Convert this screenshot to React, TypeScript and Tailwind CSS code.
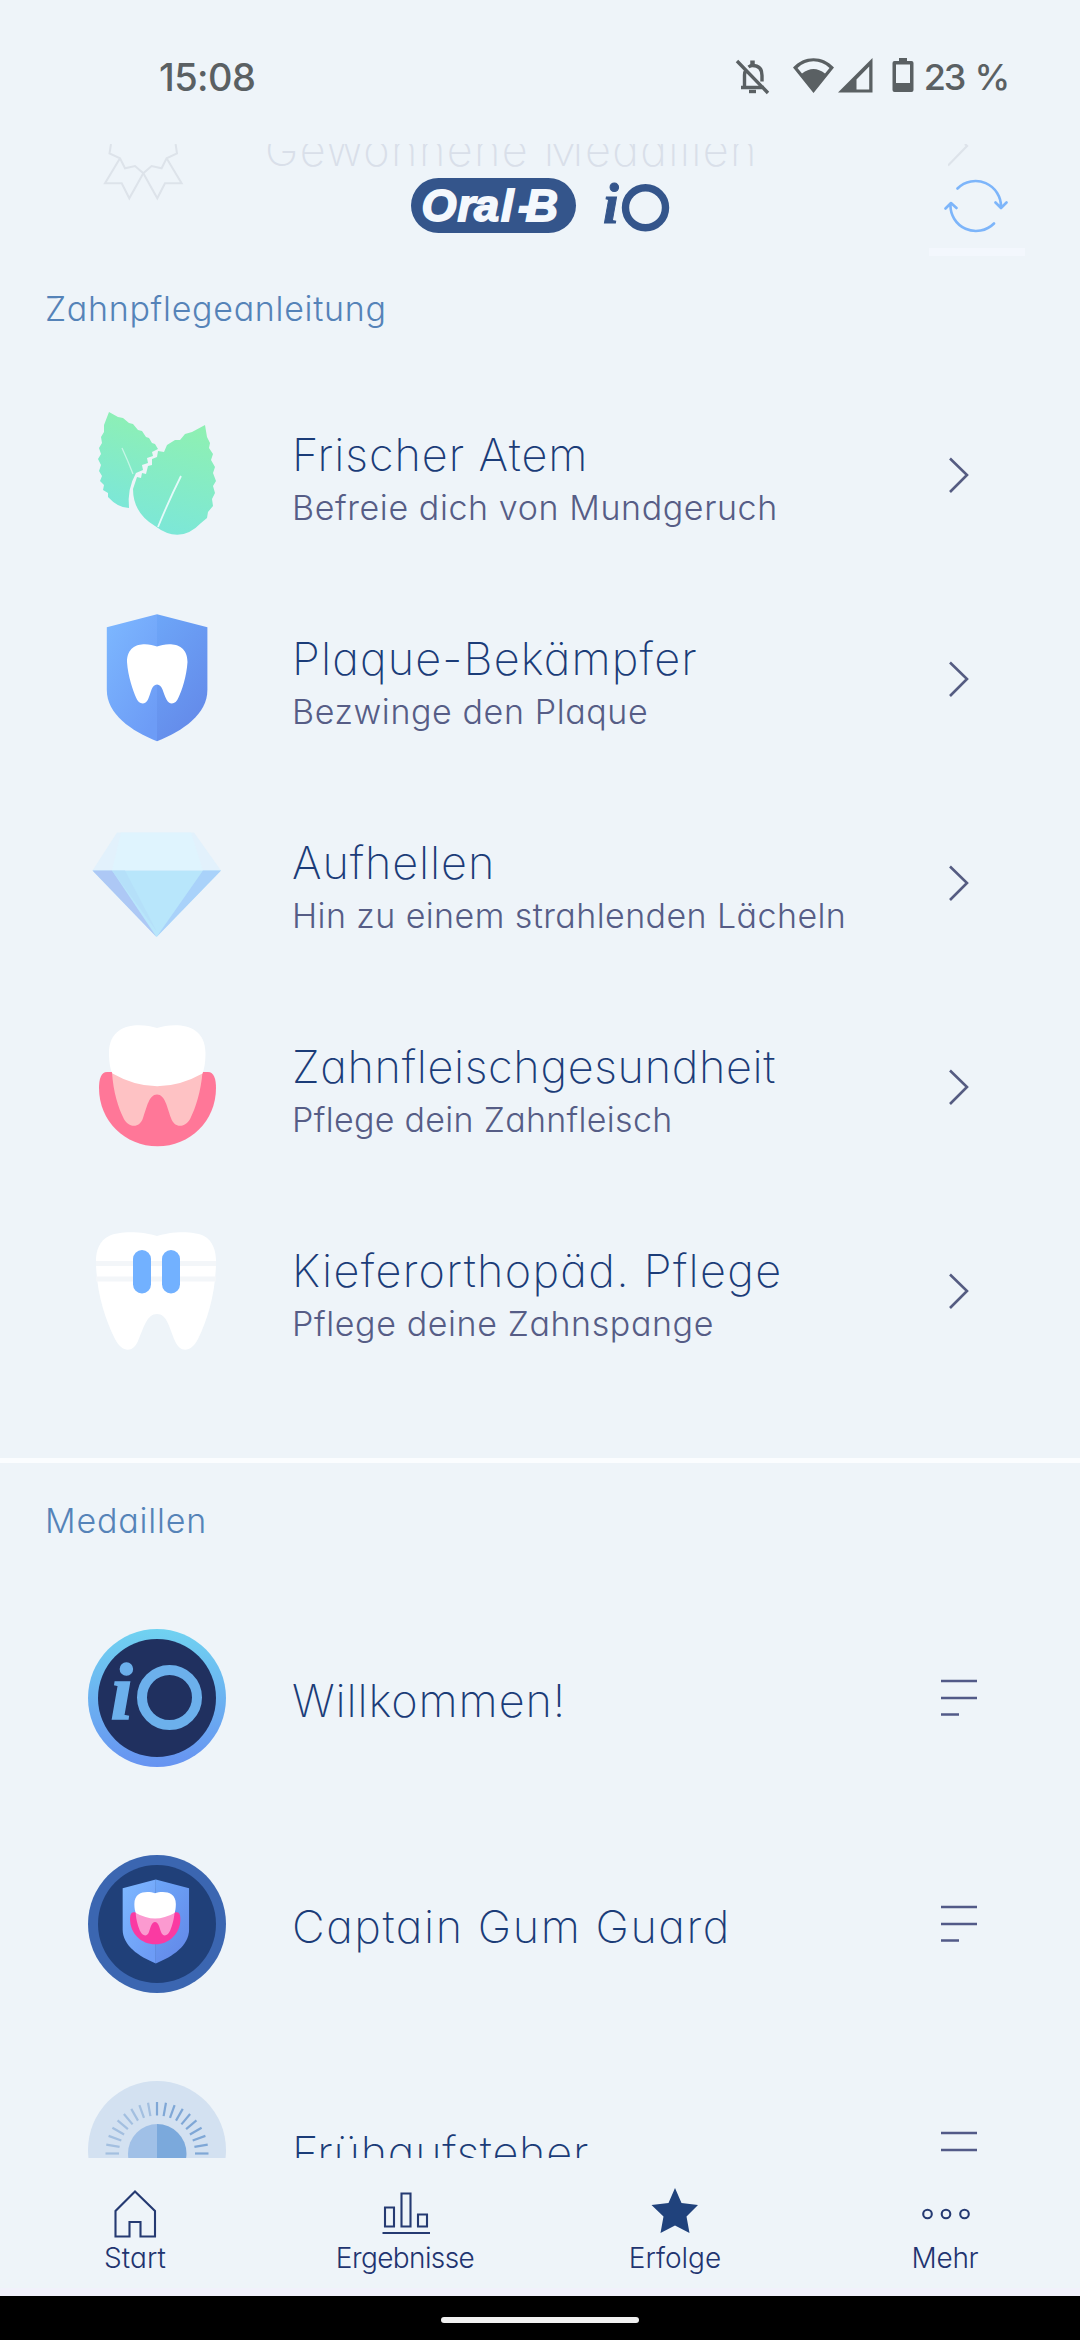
import type { ReactNode } from "react";

type Guide = {
  title: string;
  titleClass: string;
  text: string;
  textClass: string;
  icon: ReactNode;
};

type Medal = {
  title: string;
  titleClass: string;
  icon: ReactNode;
};

const guides: Guide[] = [
  {
    title: "Frischer Atem",
    titleClass: "tracking-[0.95px]",
    text: "Befreie dich von Mundgeruch",
    textClass: "tracking-[0.6px]",
    icon: <LeavesIcon />,
  },
  {
    title: "Plaque-Bekämpfer",
    titleClass: "tracking-[1.15px]",
    text: "Bezwinge den Plaque",
    textClass: "tracking-[0.6px]",
    icon: <ToothShieldIcon />,
  },
  {
    title: "Aufhellen",
    titleClass: "tracking-[0.9px]",
    text: "Hin zu einem strahlenden Lächeln",
    textClass: "tracking-[0.42px]",
    icon: <DiamondIcon />,
  },
  {
    title: "Zahnfleischgesundheit",
    titleClass: "tracking-[0.65px]",
    text: "Pflege dein Zahnfleisch",
    textClass: "tracking-[0.3px]",
    icon: <GumIcon />,
  },
  {
    title: "Kieferorthopäd. Pflege",
    titleClass: "tracking-[1.3px]",
    text: "Pflege deine Zahnspange",
    textClass: "tracking-[0.6px]",
    icon: <BracesIcon />,
  },
];

const medals: Medal[] = [
  { title: "Willkommen!", titleClass: "tracking-[0.9px]", icon: <WelcomeMedal /> },
  { title: "Captain Gum Guard", titleClass: "tracking-[1.55px]", icon: <GumGuardMedal /> },
  { title: "Frühaufsteher", titleClass: "tracking-[0.75px]", icon: <EarlyBirdMedal /> },
];

const rays = Array.from({ length: 19 }, (_, i) => -90 + i * 10);

export default function App() {
  return (
    <div className="flex h-[2340px] w-[1080px] flex-col overflow-hidden bg-[#eef4f9] font-['Inter',sans-serif] [font-feature-settings:'cv11']">
      <StatusBar />

      <main className="relative min-h-0 flex-1 overflow-hidden">
        <PreviousRow />
        <AppHeader />

        <section className="pt-[41px]">
          <SectionTitle className="tracking-[0.7px]">Zahnpflegeanleitung</SectionTitle>
          <ul className="mt-[44px]">
            {guides.map((guide) => (
              <li key={guide.title} className="flex h-[204px] items-center pr-[101px] pl-[87px]">
                {guide.icon}
                <div className="ml-[65px] flex-1 pt-2 whitespace-nowrap">
                  <h3 className={`text-[45px] leading-[52px] font-extralight text-[#1b3c78] ${guide.titleClass}`}>
                    {guide.title}
                  </h3>
                  <p className={`mt-[6px] text-[34px] leading-[42px] font-[340] text-[#565d86] ${guide.textClass}`}>
                    {guide.text}
                  </p>
                </div>
                <svg className="h-[40px] w-[40px]" viewBox="0 0 40 40" fill="none" stroke="#555c82" strokeWidth="2.6">
                  <path d="M11 3.5 28 20 11 37" />
                </svg>
              </li>
            ))}
          </ul>
        </section>

        <div className="mt-[65px] h-[5px] bg-[#fbfdff]" />

        <section className="pt-[38px]">
          <SectionTitle className="tracking-[0.8px]">Medaillen</SectionTitle>
          <ul className="mt-[44px]">
            {medals.map((medal) => (
              <li key={medal.title} className="flex h-[226px] items-center pr-[101px] pl-[87px]">
                {medal.icon}
                <h3
                  className={`ml-[65px] flex-1 pt-[5px] text-[45px] leading-[52px] font-extralight whitespace-nowrap text-[#1b3c78] ${medal.titleClass}`}
                >
                  {medal.title}
                </h3>
                <svg className="h-[40px] w-[40px]" viewBox="0 0 40 40" stroke="#525a88" strokeWidth="2.6">
                  <path d="M2 3h36M2 20h36M2 36.5h18" />
                </svg>
              </li>
            ))}
          </ul>
        </section>
      </main>

      <BottomNav />

      <div className="flex h-[44px] justify-center bg-black pt-[21px]">
        <div className="h-[6px] w-[198px] rounded-full bg-[#f0f0f0]" />
      </div>
    </div>
  );
}

function StatusBar() {
  return (
    <header className="flex h-[144px] items-start justify-between pt-[54px] pr-[72px] pl-[159px] text-[38px] leading-[46px] font-medium text-[#5a6063]">
      <span className="tracking-[-0.6px]">15:08</span>
      <div className="flex items-start">
        {/* muted bell */}
        <svg className="mt-[3px] h-[40px] w-[36px]" viewBox="0 0 36 40" fill="none" stroke="#5a6063" strokeWidth="3.4">
          <path d="M3 4 34 36M7 30.5h23M10.5 30V18q0-3 1.5-5M14.5 10q2-1.5 4-1.5 9.500 0 9.5 10v6" />
          <path d="M18.5 3.5v5" strokeWidth="4.5" />
          <path d="M15 34.5h7" />
        </svg>
        <svg className="mt-[3px] ml-[23px] h-[36px] w-[41px]" viewBox="0 0 41 36">
          <path
            d="M0 10.5C11-2 30-2 41 10.5L20.5 36ZM4.5 11 9 16.5Q20.5 7.5 32 16.5L36.5 11C27.5 2 13.5 2 4.5 11Z"
            fill="#5a6063"
            fillRule="evenodd"
          />
        </svg>
        <svg className="mt-[4px] ml-[4px] h-[35px] w-[35px]" viewBox="0 0 35 35">
          <path d="M0 34.5 34.5 0V34.5ZM18.5 31.5H31.2V8.5L18.5 21.5Z" fill="#5a6063" fillRule="evenodd" />
        </svg>
        <svg className="mt-[3px] ml-[19px] h-[36px] w-[22px]" viewBox="0 0 22 36">
          <path
            d="M7 1h8v3h4.5q2 0 2 2v27q0 2-2 2h-17q-2 0-2-2V6q0-2 2-2H7ZM4 7.500V26h14V7.500Z"
            fill="#5a6063"
            fillRule="evenodd"
          />
        </svg>
        <span className="ml-[10px] text-[36px] tracking-[-2.2px] [word-spacing:3px] whitespace-pre">23 %</span>
      </div>
    </header>
  );
}

// Last row of the section above, faded out behind the app header
function PreviousRow() {
  return (
    <div className="flex h-[104px] items-start overflow-hidden pl-[100px]">
      <svg className="h-[60px] w-[90px]" viewBox="0 0 90 60" fill="none" stroke="#dde3ea" strokeWidth="2">
        <path d="M11 0 9.5 9.5 20 14.3 25 24.3 35 22 43.3 29.3 29.3 54.3 21.7 39.3H5L20 14.3" />
        <path d="M75.6 0 77 9.5 66.6 14.3 61.6 24.3 51.6 22 43.3 29.3 57.3 54.3 65 39.3H81.6L66.6 14.3" />
      </svg>
      <p className="-mt-[20px] ml-[75px] flex-1 text-[45px] leading-[52px] font-extralight tracking-[1.4px] text-[#d9dfe9]">
        Gewonnene Medaillen
      </p>
      <svg className="mr-[108px] h-[24px] w-[24px]" viewBox="0 0 24 24" fill="none" stroke="#dde3ea" strokeWidth="2.2">
        <path d="M0 21.5 19 2 17 0" />
      </svg>
    </div>
  );
}

function AppHeader() {
  return (
    <div className="absolute inset-x-0 top-[34px] flex h-[78px] items-start pl-[411px]">
      <svg className="h-[56px] w-[262px]" viewBox="0 0 262 56">
        <rect width="165" height="55" rx="27.5" fill="#34558b" />
        <text
          x="10.5 46.5 63 90 107 114.5"
          y="43"
          fill="#f4f8fd"
          stroke="#f4f8fd"
          strokeWidth="1.8"
          className="font-['Liberation_Sans',sans-serif] text-[45px] font-bold italic"
        >
          Oral-B
        </text>
        <text
          x="192"
          y="44.5"
          fill="#34558b"
          stroke="#34558b"
          className="font-['Liberation_Serif',serif] text-[57px] font-bold italic"
        >
          i
        </text>
        <circle cx="234.500" cy="29.7" r="20" fill="none" stroke="#34558b" strokeWidth="7.4" />
      </svg>
      <button className="ml-[256px] h-[78px] w-[96px] border-b-8 border-[#f3f7fd] pl-[15px]">
        <svg
          className="-mt-[14px] h-[56px] w-[64px]"
          viewBox="0 0 64 56"
          fill="none"
          stroke="#7db5fa"
          strokeWidth="2.6"
          strokeLinecap="round"
          strokeLinejoin="round"
        >
          <path d="M13.5 10.5A25.5 25.5 0 0 1 57 29.5M51.5 24.5 57 30 62.5 24.5" />
          <path d="M50 45.5A25.5 25.5 0 0 1 6.5 26M1.5 30.5 7 25 12.5 30" />
        </svg>
      </button>
    </div>
  );
}

function SectionTitle({ className, children }: { className: string; children: ReactNode }) {
  return <h2 className={`pl-[45px] text-[34px] leading-[40px] font-[340] text-[#5583b8] ${className}`}>{children}</h2>;
}

function LeavesIcon() {
  return (
    <svg className="h-[140px] w-[140px]" viewBox="0 0 140 140">
      <defs>
        <linearGradient id="mint" x1="0.6" y1="0" x2="0.4" y2="1">
          <stop offset="0" stopColor="#8ef0b3" />
          <stop offset="1" stopColor="#7ce7d8" />
        </linearGradient>
      </defs>
      <path
        d="M22 7 31 12 36 13 42 18 46 19 51 25 55 26 59 32 62 33 65 38 68 39 71 44 65 47 66 51 60 53 61 58 55 60 56 65 49 68Q40 84 42 103 31 103 21 92L21 88 16 85 17 80 13 76 15 71 12 66 14 60 11 54 14 49 12 43 15 38 14 32 17 27 17 20Z"
        fill="url(#mint)"
      />
      <path
        d="M118 20 120 32 123 38 122 43 126 49 124 55 128 62 126 68 129 76 126 81 128 88 125 94 126 101 121 107 120 113 114 118Q93 140 68 121 46 108 46 84L50 72 54 73 55 68 59 69 61 61 65 60 65 54 70 52 71 46 77 47 80 40 88 35 93 35 98 29 105 27Z"
        fill="url(#mint)"
      />
      <path d="M71 122Q82 95 94 71" fill="none" stroke="#e4fafa" strokeWidth="1.8" />
      <path d="M35 43Q41 56 46 69" fill="none" stroke="#c4f6e6" strokeWidth="1.3" />
    </svg>
  );
}

function Shield({ id }: { id: string }) {
  return (
    <>
      <defs>
        <linearGradient id={`${id}-left`} x1="0" y1="0" x2="0.7" y2="1">
          <stop offset="0" stopColor="#7db8ff" />
          <stop offset="1" stopColor="#6d9cf6" />
        </linearGradient>
        <linearGradient id={`${id}-right`} x1="0" y1="0" x2="0.5" y2="1">
          <stop offset="0" stopColor="#6da6f8" />
          <stop offset="1" stopColor="#648bea" />
        </linearGradient>
      </defs>
      <path d="M70 5.3 19.8 18.3V81C19.8 105 44 122 70 132.3Z" fill={`url(#${id}-left)`} />
      <path d="M70 5.3 120.4 18.3V81C120.4 105 96 122 70 132.3Z" fill={`url(#${id}-right)`} />
    </>
  );
}

function ToothShieldIcon() {
  return (
    <svg className="h-[140px] w-[140px]" viewBox="0 0 140 140">
      <Shield id="plaque" />
      <path
        d="M70 37.5C60 33.5 40 32.5 40 53 41 68 46 81 49 88.5 51.5 95.5 58 96.5 61 90.5 64 84 64.5 75.5 70 75.5S76 84 79.5 90.5C82.5 96.5 89 95.5 91.5 88.5 95 81 99.5 68 100.5 53 100.5 32.5 80 33.5 70 37.5Z"
        fill="#fff"
      />
    </svg>
  );
}

function DiamondIcon() {
  return (
    <svg className="h-[140px] w-[140px]" viewBox="0 0 140 140">
      <path d="M30 19.5H107L134 57.5H5.5Z" fill="#e2f1fc" />
      <path d="M34 19.5H104L116 57.5H25Z" fill="#dff4fe" />
      <path d="M5.5 57.5H134L69.5 124Z" fill="#b8e6fb" />
      <path d="M5.5 57.5H25L69.5 124Z" fill="#adc8f5" />
      <path d="M25 57.5H38L69.5 118Z" fill="#b5e0f9" />
      <path d="M134 57.5H116L69.5 124Z" fill="#a9d2fa" />
    </svg>
  );
}

function GumShape({ gum, root }: { gum: string; root: string }) {
  return (
    <>
      <path
        d="M20 55C14 55 12 62 12 71 12 104 38 129.3 70.5 129.3S129 104 129 71C129 62 127 55 121 55Z"
        fill={gum}
      />
      <path
        d="M25 55C26 75 32 92 36 100 40 110 52 113 56 101 60 90 62 77.5 70 77.5S80 90 84 101C88 113 100 110 104 100 108 92 114 75 115.5 55Z"
        fill={root}
      />
      <path
        d="M70 11C55 6 22 4 22 36 22 46 23.5 53 25.5 56.5Q70 82 115.5 56.5C117 53 118.5 46 118.5 36 118.5 4 85 6 70 11Z"
        fill="#fff"
      />
    </>
  );
}

function GumIcon() {
  return (
    <svg className="h-[140px] w-[140px]" viewBox="0 0 140 140">
      <GumShape gum="#ff7798" root="#fec2c4" />
    </svg>
  );
}

function BracesIcon() {
  return (
    <svg className="h-[140px] w-[140px]" viewBox="0 0 140 140">
      <path
        d="M70 15C58 11 34 9 22 15 12 20 9 30 9 40 9 70 18 98 28 118 35 132 46 132 51 120 57 106 60 93 70 93S82 106 88 120C93 132 104 132 111 118 121 98 129 70 129 40 129 30 126 20 117 15 105 9 82 11 70 15Z"
        fill="#fff"
      />
      <path d="M9 42.6H129M9 58H129" stroke="#f3f6f9" strokeWidth="5" />
      <rect x="46" y="29" width="18" height="43.5" rx="9" fill="#72b1ff" />
      <rect x="75" y="29" width="18" height="43.5" rx="9" fill="#72b1ff" />
    </svg>
  );
}

function WelcomeMedal() {
  return (
    <svg className="h-[140px] w-[140px]" viewBox="0 0 140 140">
      <defs>
        <linearGradient id="medal-ring" x1="0" y1="0" x2="0" y2="1">
          <stop offset="0" stopColor="#70d2f1" />
          <stop offset="1" stopColor="#6793f1" />
        </linearGradient>
      </defs>
      <circle cx="70" cy="70" r="69" fill="url(#medal-ring)" />
      <circle cx="70" cy="70" r="59" fill="#20305f" />
      <text
        x="23.5"
        y="91"
        fill="#6cb0ec"
        stroke="#6cb0ec"
        strokeWidth="1.5"
        className="font-['Liberation_Serif',serif] text-[80px] font-bold italic"
      >
        i
      </text>
      <circle cx="82.5" cy="69.5" r="27.5" fill="none" stroke="#6cb0ec" strokeWidth="10" />
    </svg>
  );
}

function GumGuardMedal() {
  return (
    <svg className="h-[140px] w-[140px]" viewBox="0 0 140 140">
      <circle cx="70" cy="70" r="69" fill="#3b66b1" />
      <circle cx="70" cy="70" r="59" fill="#204079" />
      <g transform="translate(22.6 22.1) scale(0.66)">
        <Shield id="guard" />
      </g>
      <g transform="translate(37.9 34.6) scale(0.43)">
        <GumShape gum="#fa3aa2" root="#fb9ad0" />
      </g>
    </svg>
  );
}

function EarlyBirdMedal() {
  return (
    <svg className="h-[140px] w-[140px]" viewBox="0 0 140 140">
      <circle cx="70" cy="70" r="69" fill="#d3e1f1" />
      {rays.map((angle) => (
        <path
          key={angle}
          d="M70 22v13.5"
          transform={`rotate(${angle} 70 73.5)`}
          stroke={angle < 0 ? "#a3bfe0" : "#7fa7d6"}
          strokeWidth="2.2"
        />
      ))}
      <path d="M70.5 44A29.5 29.5 0 0 0 70.5 103Z" fill="#a0c0e7" />
      <path d="M70 44A29.5 29.5 0 0 1 70 103Z" fill="#7ba9dc" />
    </svg>
  );
}

function BottomNav() {
  return (
    <nav className="grid h-[138px] shrink-0 grid-cols-4 border-b-8 border-[#f1f1fb] pt-[27px] text-[28px] leading-[34px] font-light text-[#1f3470]">
      <NavItem label="Start" className="tracking-[0.1px]">
        <path d="M28 6.5 8.5 26V51.5H22.5V37H33.5V51.5H48V26Z" />
      </NavItem>
      <NavItem label="Ergebnisse" className="tracking-[-0.6px]">
        <path d="M8 22.5h9v19H8ZM24.5 8.5h9v33h-9ZM41 29.5h9v12h-9ZM5.5 48H53" />
      </NavItem>
      <NavItem label="Erfolge" className="tracking-[0px]">
        <path
          d="M28 3 34.5 18 51 20 39.5 31.5 42.5 48 28 40.5 13.5 48 16.5 31.5 4.5 20 21.5 18Z"
          fill="#20427c"
          stroke="none"
        />
      </NavItem>
      <NavItem label="Mehr" className="tracking-[-0.3px]">
        <circle cx="10.5" cy="29" r="4.3" />
        <circle cx="29" cy="29" r="4.3" />
        <circle cx="47.5" cy="29" r="4.3" />
      </NavItem>
    </nav>
  );
}

function NavItem({ label, className, children }: { label: string; className: string; children: ReactNode }) {
  return (
    <a className="flex flex-col items-center">
      <svg className="h-[56px] w-[56px]" viewBox="0 0 56 56" fill="none" stroke="#253a72" strokeWidth="2.1">
        {children}
      </svg>
      <span className={className}>{label}</span>
    </a>
  );
}
